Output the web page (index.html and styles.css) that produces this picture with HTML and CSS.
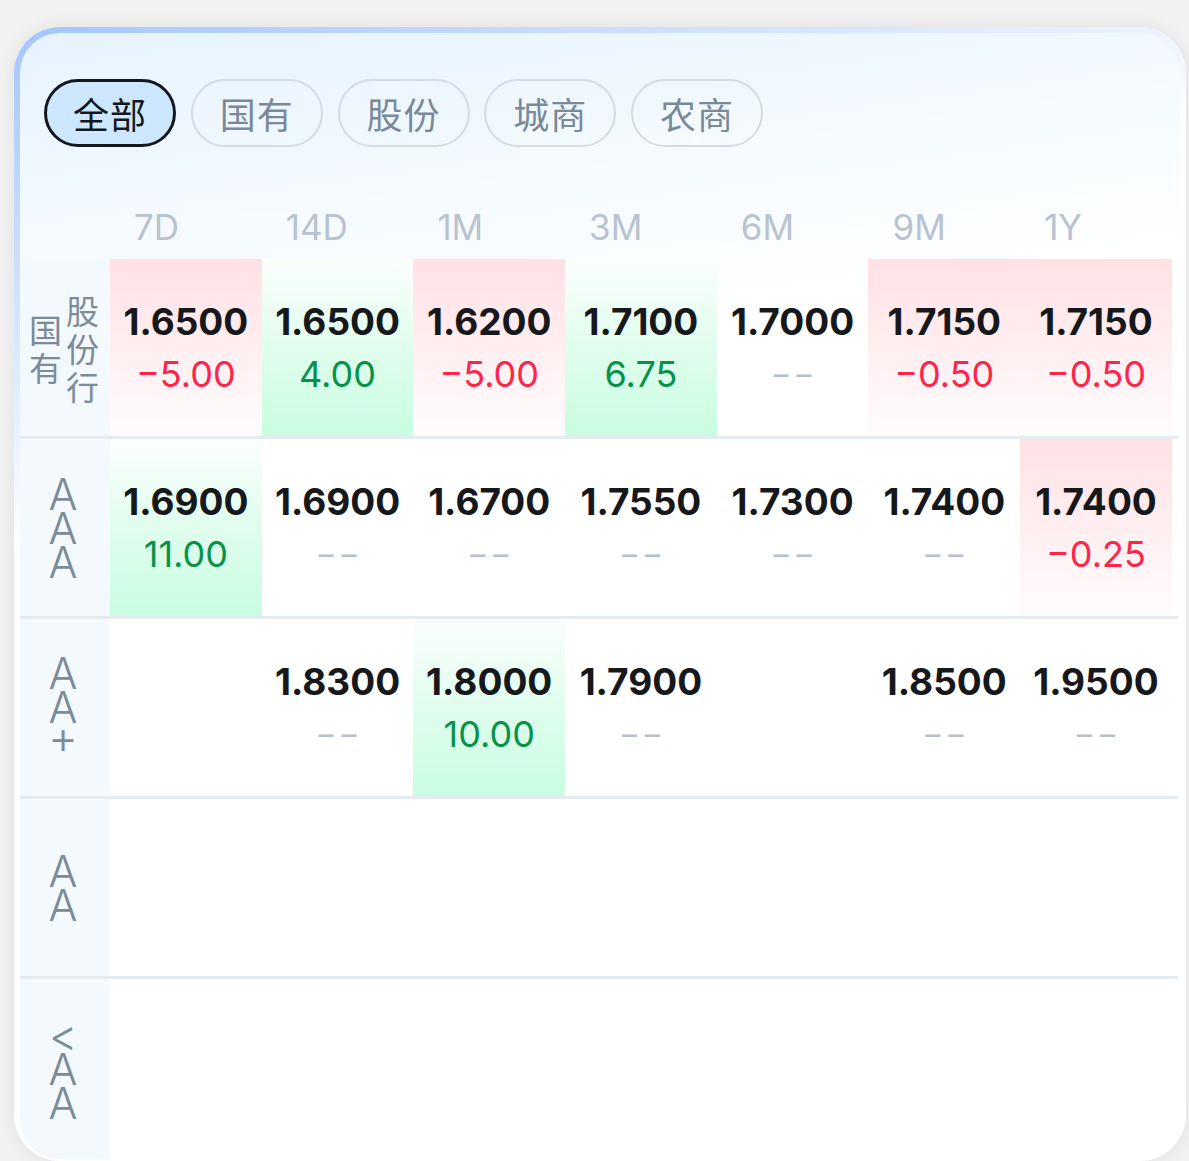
FILE: index.html
```html
<!DOCTYPE html>
<html lang="zh-CN">
<head>
<meta charset="utf-8">
<title>利率矩阵</title>
<link rel="stylesheet" href="styles.css">
</head>
<body>
<div class="card">
  <div class="inner">
    <div class="tabs">
      <div class="tab active">全部</div>
      <div class="tab">国有</div>
      <div class="tab">股份</div>
      <div class="tab">城商</div>
      <div class="tab">农商</div>
    </div>
    <div class="table">
      <div class="head">
        <div class="corner"></div>
        <div class="th">7D</div>
        <div class="th">14D</div>
        <div class="th">1M</div>
        <div class="th">3M</div>
        <div class="th">6M</div>
        <div class="th">9M</div>
        <div class="th">1Y</div>
      </div>

      <div class="row">
        <div class="side cjk">
          <div class="vcol">国<br>有</div>
          <div class="vcol">股<br>份<br>行</div>
        </div>
        <div class="cell red"><div class="val">1.6500</div><div class="chg neg">−5.00</div></div>
        <div class="cell green"><div class="val">1.6500</div><div class="chg pos">4.00</div></div>
        <div class="cell red"><div class="val">1.6200</div><div class="chg neg">−5.00</div></div>
        <div class="cell green"><div class="val">1.7100</div><div class="chg pos">6.75</div></div>
        <div class="cell"><div class="val">1.7000</div><div class="chg none">––</div></div>
        <div class="cell red"><div class="val">1.7150</div><div class="chg neg">−0.50</div></div>
        <div class="cell red"><div class="val">1.7150</div><div class="chg neg">−0.50</div></div>
      </div>

      <div class="row">
        <div class="side latin">
          <div class="vcol">A<br>A<br>A</div>
        </div>
        <div class="cell green"><div class="val">1.6900</div><div class="chg pos">11.00</div></div>
        <div class="cell"><div class="val">1.6900</div><div class="chg none">––</div></div>
        <div class="cell"><div class="val">1.6700</div><div class="chg none">––</div></div>
        <div class="cell"><div class="val">1.7550</div><div class="chg none">––</div></div>
        <div class="cell"><div class="val">1.7300</div><div class="chg none">––</div></div>
        <div class="cell"><div class="val">1.7400</div><div class="chg none">––</div></div>
        <div class="cell red"><div class="val">1.7400</div><div class="chg neg">−0.25</div></div>
      </div>

      <div class="row">
        <div class="side latin">
          <div class="vcol">A<br>A<br><span class="plus">+</span></div>
        </div>
        <div class="cell"></div>
        <div class="cell"><div class="val">1.8300</div><div class="chg none">––</div></div>
        <div class="cell green"><div class="val">1.8000</div><div class="chg pos">10.00</div></div>
        <div class="cell"><div class="val">1.7900</div><div class="chg none">––</div></div>
        <div class="cell"></div>
        <div class="cell"><div class="val">1.8500</div><div class="chg none">––</div></div>
        <div class="cell"><div class="val">1.9500</div><div class="chg none">––</div></div>
      </div>

      <div class="row">
        <div class="side latin">
          <div class="vcol">A<br>A</div>
        </div>
        <div class="cell"></div><div class="cell"></div><div class="cell"></div><div class="cell"></div>
        <div class="cell"></div><div class="cell"></div><div class="cell"></div>
      </div>

      <div class="row last">
        <div class="side latin">
          <div class="vcol"><span class="lt">&lt;</span><br>A<br>A</div>
        </div>
        <div class="cell"></div><div class="cell"></div><div class="cell"></div><div class="cell"></div>
        <div class="cell"></div><div class="cell"></div><div class="cell"></div>
      </div>
    </div>
  </div>
</div>
</body>
</html>
```

FILE: styles.css
```css
* { box-sizing: border-box; }

html, body {
  margin: 0;
  padding: 0;
  background: #f1f1f1;
  height: 1161px;
  overflow: hidden;
  font-family: "Inter", "Noto Sans CJK SC", sans-serif;
}

.card {
  margin: 27px 0 0 14px;
  width: 1172px;
  height: 1134px;
  padding: 6px 6px 2px 6px;
  border-radius: 46px;
  background: linear-gradient(160deg, #a5c6fb 0%, #d3e4fd 18%, #ffffff 34%);
  box-shadow: 0 0 18px rgba(0, 0, 0, 0.07);
}

.inner {
  height: 100%;
  border-radius: 40px;
  overflow: hidden;
  background: linear-gradient(172deg, #e6f3ff 0%, #f6fbff 18%, #ffffff 30%);
}

.tabs {
  display: flex;
  gap: 14.75px;
  padding: 46px 0 0 24px;
}

.tab {
  width: 132px;
  height: 68px;
  border-radius: 34px;
  border: 2px solid #d4dbe4;
  display: flex;
  align-items: center;
  justify-content: center;
  font-family: "Noto Sans CJK SC", sans-serif;
  font-size: 36px;
  color: #7a8998;
  letter-spacing: 1px;
}

.tab.active {
  border: 3px solid #14181d;
  background: #cde7ff;
  color: #14181d;
}

.table {
  width: 1158px;
}

.head {
  display: grid;
  grid-template-columns: 90px repeat(7, 151.7px);
  height: 112px;
  align-items: end;
}

.th {
  padding: 0 0 12px 24px;
  line-height: 40px;
  font-size: 35px;
  font-weight: 400;
  color: #b9c3d0;
}

.row {
  display: grid;
  grid-template-columns: 90px repeat(7, 151.7px);
  height: 180px;
  border-bottom: 3px solid #e6ebf0;
}

.row.last {
  border-bottom: none;
}

.side {
  background: #f4f9fe;
  display: flex;
  justify-content: center;
  align-items: center;
  color: #7b8b99;
}

.side.cjk {
  gap: 4px;
  padding-right: 2px;
}

.side.cjk .vcol {
  text-align: center;
  font-family: "Noto Sans CJK SC", sans-serif;
  font-size: 33px;
  line-height: 38px;
}

.side.latin .vcol {
  text-align: center;
  font-family: "Inter", sans-serif;
  font-weight: 300;
  font-size: 43px;
  line-height: 34px;
  margin-left: -4px;
}

.side.latin .plus {
  font-size: 46px;
  position: relative;
  top: -4px;
}

.side.latin .lt {
  font-size: 44px;
}

.cell {
  display: flex;
  flex-direction: column;
  justify-content: center;
  align-items: center;
}

.cell.red {
  background: linear-gradient(to bottom, #ffe1e5 0%, #fff0f2 55%, #fffcfd 100%);
}

.cell.green {
  background: linear-gradient(to bottom, #fbfffd 0%, #e3fdef 45%, #c9fde1 100%);
}

.val {
  line-height: 53px;
  font-size: 37px;
  font-weight: 700;
  color: #16181b;
}

.chg {
  line-height: 53px;
  font-size: 36px;
  font-weight: 400;
}

.chg.neg { color: #ff2449; }
.chg.pos { color: #07924a; }
.chg.none {
  color: #b8c0cb;
  font-size: 30px;
  letter-spacing: 8px;
  margin-right: -8px;
}
```
